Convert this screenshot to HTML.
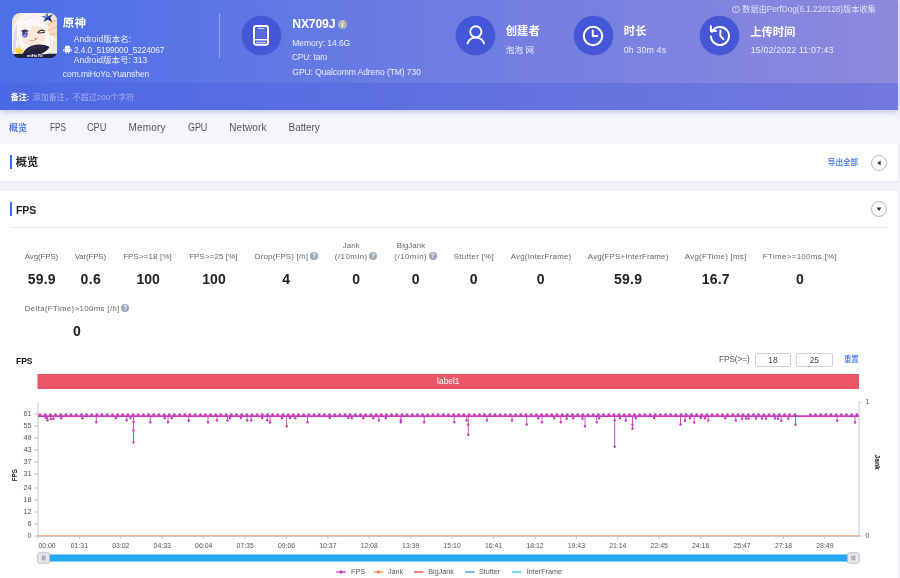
<!DOCTYPE html>
<html lang="zh-CN">
<head>
<meta charset="utf-8">
<title>PerfDog</title>
<style>
*{box-sizing:border-box;margin:0;padding:0}
html,body{width:900px;height:578px;overflow:hidden}
body{background:#f2f3f9;filter:blur(0.4px);font-family:"Liberation Sans","Noto Sans CJK SC",sans-serif;color:#333;position:relative}
.a{position:absolute;white-space:nowrap;line-height:1}
#hdr{position:absolute;left:0;top:0;width:898px;height:110.4px;background:linear-gradient(90deg,#4c6fe8 0%,#6b7ce2 45%,#8d89dd 100%);box-shadow:0 2px 6px rgba(105,110,215,.38)}
#note{position:absolute;left:0;top:82.9px;width:898px;height:27.5px;background:rgba(74,94,222,.40)}
.circ{position:absolute;width:39.6px;height:39.6px;border-radius:50%;background:#4557d6;box-shadow:0 0 0 .6px rgba(69,87,214,.5)}
#tabs{position:absolute;left:0;top:110px;width:898px;height:34px;background:#f5f6fb}
.card{position:absolute;left:0;width:898px;background:#fff}
.bar{position:absolute;left:9.5px;width:2.5px;height:14px;background:#3b6cf6}
.q{position:absolute;width:8px;height:8px;border-radius:50%;background:#9ea6ba;color:#fff;font-size:6.5px;line-height:8px;text-align:center;font-weight:bold}
.inp{position:absolute;height:14px;width:36.4px;border:1px solid #cdd1db;border-radius:1.5px;background:#fff}
svg text{font-family:"Liberation Sans","Noto Sans CJK SC",sans-serif}
</style>
</head>
<body>
<div id="tabs"></div><div id="hdr"></div><div id="note"></div>
<div class="card" style="top:143.5px;height:37px;box-shadow:0 1px 3px rgba(120,130,180,.12)"></div>
<div class="card" style="top:191px;height:400px"></div>
<svg class="a" style="left:11.7px;top:12.7px" width="45.4" height="45.4" viewBox="0 0 45.4 45.4">
<defs><clipPath id="ic"><rect x="0" y="0" width="45.4" height="45.4" rx="8.2"/></clipPath>
<filter id="ib" x="-5%" y="-5%" width="110%" height="110%"><feGaussianBlur stdDeviation="0.5"/></filter></defs>
<g clip-path="url(#ic)"><g filter="url(#ib)">
<rect x="-2" y="-2" width="50" height="50" fill="#f3e7d6"/>
<!-- back hair -->
<path d="M0.6 42C-1 26 0 9 10 2C20 -2.5 33 -1 38 6C43 13 43 25 40 33L33 41H5Z" fill="#f7f4f2"/>
<path d="M1.2 40C0.6 29 1.6 17 5 10.5C4.6 20 5.6 31 9.5 38.5Z" fill="#e0d9de"/>
<path d="M5.5 37C4.5 30 5 24 6.5 20" stroke="#fff" stroke-width="1.4" fill="none"/>
<!-- hand V sign -->
<path d="M34 11.5L44 4L46 5V24L37.5 22.5Z" fill="#f9dcc6"/>
<path d="M34.5 12.5L45.4 6.5M36 17.5L45.4 13.5M37.5 21.8L45.4 20.5" stroke="#e3a57a" stroke-width="0.8" stroke-opacity=".8" fill="none"/>
<!-- face -->
<path d="M8.5 17C10 11 20 8 28 11C33 13 35.5 19 34 24.5C32 30 25 33 19 32.5C12 32 7.5 25 8.5 17Z" fill="#fce9dc"/>
<path d="M10 27C14 31 22 32.5 28 30C24 33.5 14 33.5 10 27Z" fill="#f6d8c6"/>
<!-- bangs -->
<path d="M5 22C4 10 14 2 26 4C20 6 13 11 11 19C9.5 15 7 16 5 22Z" fill="#fcfaf9"/>
<path d="M14 12C18 6 28 4 35 10C37 13 37 17 35.5 20C33 14 27 11 20 13C19 16 17.5 18 16 19.5C16 16 15.5 14 14 12Z" fill="#fbf9f8"/>
<path d="M20 13C21 16 23 19 26 21M12 8C15 5 20 4 24 4.5" stroke="#e3dbe0" stroke-width="0.8" fill="none"/>
<!-- right lock -->
<path d="M33 19C39.5 22 42 30 38.5 37.5C35.5 40.5 30 40 28 38.5C33 35 35 28 33 19Z" fill="#fbf8f7"/>
<path d="M37 24C39.6 28.5 39 34 36.8 38.2" stroke="#ddd6de" stroke-width="0.8" fill="none"/>
<!-- left eye -->
<ellipse cx="12.9" cy="20.9" rx="2.7" ry="3.6" fill="#30357f"/>
<ellipse cx="12.9" cy="22.4" rx="2" ry="1.9" fill="#7f8eea"/>
<path d="M9.6 18.6C11 16.6 14.5 16.4 16.4 18.4" stroke="#241f3a" stroke-width="1.1" fill="none"/>
<circle cx="14" cy="19.6" r="0.7" fill="#fff"/>
<!-- wink -->
<path d="M25.8 19.4C27.8 17 30.6 16.8 32.4 18M26.6 20L32.4 19.5" stroke="#3a2c28" stroke-width="1.1" fill="none" stroke-linecap="round"/>
<!-- mouth -->
<path d="M17.3 26.9C19.5 28.3 21.8 28.1 23.6 26.5" stroke="#c48272" stroke-width="0.7" fill="none"/>
<ellipse cx="23.9" cy="25.7" rx="1.2" ry="1" fill="#e86f66"/>
<!-- 4-point star ornament -->
<path d="M35 -0.6L36.2 3.2L41 1.2L38.2 5L40.6 9.4L36 6.8L31.4 8.8L33.4 5L29 3.6L33.6 3.2Z" fill="#27418f"/>
<path d="M35 1L35.7 3.6L33.6 5.2L32 3.8Z" fill="#6d92dc"/>
<path d="M36 6L38 5L39.6 8.4Z" fill="#1b2a66"/>
<!-- dark scarf -->
<path d="M10.5 41.5C12.5 35 20 31.5 27 31.5C31.5 31.5 35.5 32.5 37.5 34C34.5 39.5 28 41.5 24 42.5Z" fill="#212039"/>
<path d="M14 38.5C18 35 25 33.3 32 34.2" stroke="#3d3e6a" stroke-width="0.8" fill="none"/>
<!-- yellow crown -->
<path d="M3.3 38.5L4.6 34.2L6.6 36.8L8 33.2L9.6 36.8L11.8 35L10.6 40.5H4.6Z" fill="#f5d33a"/>
<!-- bottom bar -->
<path d="M-1 41.3C8 40 18 41.3 23 41.5C30 41.7 38 40.2 46.4 41V46.4H-1Z" fill="#1f2040"/>
</g>
<text x="22.7" y="44.5" font-size="4.3" font-weight="bold" fill="#fff" text-anchor="middle">miHoYo</text>
</g>
</svg>

<div class="a" style="left:62.77px;top:16.62px;font-size:11.6px;color:#fff;letter-spacing:0.130px;font-weight:bold;">原神</div>
<div class="a" style="left:73.83px;top:35.04px;font-size:8.5px;color:#eceeff;letter-spacing:0.015px;">Android版本名:</div>
<svg class="a" style="left:62.5px;top:44.8px" width="9" height="9" viewBox="0 0 9 9"><path d="M1.6 3.4a2.9 2.9 0 0 1 5.8 0Z M1.6 3.8H7.4V7.1H6.3V8.6H5.3V7.1H3.7V8.6H2.7V7.1H1.6Z M0.3 3.9H1.1V6.4H0.3Z M7.9 3.9H8.7V6.4H7.9Z" fill="#fff"/></svg>
<div class="a" style="left:73.83px;top:45.54px;font-size:8.5px;color:#eceeff;letter-spacing:-0.120px;transform:scaleX(0.982);transform-origin:0 50%;">2.4.0_5199000_5224067</div>
<div class="a" style="left:73.83px;top:56.34px;font-size:8.5px;color:#eceeff;letter-spacing:-0.024px;">Android版本号: 313</div>
<div class="a" style="left:62.83px;top:70.03px;font-size:8.5px;color:#eceeff;letter-spacing:-0.090px;">com.miHoYo.Yuanshen</div>
<div class="a" style="left:218.8px;top:12.5px;width:1px;height:45px;background:rgba(255,255,255,.38)"></div>
<div class="circ" style="left:241.8px;top:15.499999999999996px"></div>
<svg class="a" style="left:252.3px;top:24.1px" width="18" height="23" viewBox="0 0 18 23" fill="none" stroke="#fff"><rect x="2" y="2" width="14" height="18.8" rx="2.2" stroke-width="1.9"/><rect x="3.6" y="6.2" width="10.8" height="7.8" fill="rgba(255,255,255,.13)" stroke="none"/><path d="M5.4 4.5H12.6" stroke-width="1.2" stroke-opacity=".8"/><path d="M2 15.7H16" stroke-width="1.5"/><path d="M4.2 18.3H13.8" stroke-width="1.1" stroke-opacity=".8"/></svg>
<div class="a" style="left:292.26px;top:18.32px;font-size:12.2px;color:#fff;letter-spacing:-0.176px;font-weight:bold;">NX709J</div>
<div class="a" style="left:338px;top:20px;width:9px;height:9px;border-radius:50%;background:#b4b4b0;color:#fff;font-size:7.6px;line-height:9px;text-align:center;font-style:italic;font-weight:bold;font-family:'Liberation Serif',serif">i</div>
<div class="a" style="left:292.33px;top:38.63px;font-size:8.5px;color:#eceeff;letter-spacing:-0.057px;">Memory: 14.6G</div>
<div class="a" style="left:292.33px;top:53.34px;font-size:8.5px;color:#eceeff;letter-spacing:-0.120px;transform:scaleX(0.975);transform-origin:0 50%;">CPU: taro</div>
<div class="a" style="left:292.33px;top:68.43px;font-size:8.5px;color:#eceeff;letter-spacing:-0.064px;">GPU: Qualcomm Adreno (TM) 730</div>
<div class="circ" style="left:455.7px;top:15.499999999999996px"></div>
<svg class="a" style="left:463.5px;top:23.3px" width="24" height="24" viewBox="0 0 24 24" fill="none" stroke="#fff" stroke-width="1.9" stroke-linecap="round"><circle cx="11.8" cy="8.8" r="5.6"/><path d="M3.5 20.3A8.9 8.9 0 0 1 20.1 20.3"/></svg>
<div class="a" style="left:505.77px;top:26.36px;font-size:11.3px;color:#fff;letter-spacing:0.015px;font-weight:bold;">创建者</div>
<div class="a" style="left:505.83px;top:45.94px;font-size:8.5px;color:#eceeff;letter-spacing:0.116px;">泡泡 网</div>
<div class="circ" style="left:573.6px;top:15.499999999999996px"></div>
<svg class="a" style="left:581.3px;top:23.5px" width="24" height="24" viewBox="0 0 24 24" fill="none" stroke="#fff" stroke-width="2" stroke-linecap="round" stroke-linejoin="round"><circle cx="12" cy="12" r="9.2"/><path d="M11.8 6.4V12H16.4"/></svg>
<div class="a" style="left:623.77px;top:26.36px;font-size:11.3px;color:#fff;letter-spacing:0.121px;font-weight:bold;">时长</div>
<div class="a" style="left:623.82px;top:45.79px;font-size:8.8px;color:#eceeff;letter-spacing:0.142px;">0h 30m 4s</div>
<div class="circ" style="left:699.8000000000001px;top:15.499999999999996px"></div>
<svg class="a" style="left:707.7px;top:23.7px" width="24" height="24" viewBox="0 0 24 24" fill="none" stroke="#fff" stroke-width="2" stroke-linecap="round" stroke-linejoin="round"><path d="M4 7.8A9 9 0 1 1 3 12.6"/><path d="M2.9 2.2V7.1H8"/><path d="M12.4 6.4V11.8L15.3 15.2"/></svg>
<div class="a" style="left:750.17px;top:26.56px;font-size:11.3px;color:#fff;letter-spacing:-0.038px;font-weight:bold;">上传时间</div>
<div class="a" style="left:750.82px;top:46.14px;font-size:8.9px;color:#eceeff;letter-spacing:0.109px;">15/02/2022 11:07:43</div>
<div class="a" style="left:732.2px;top:5.9px;width:7.4px;height:7.4px;border-radius:50%;border:0.8px solid rgba(255,255,255,.7);color:rgba(255,255,255,.7);font-size:5.5px;line-height:5.8px;text-align:center">i</div>
<div class="a" style="left:742.34px;top:5.88px;font-size:8.2px;color:rgba(255,255,255,.74);letter-spacing:-0.014px;">数据由PerfDog(6.1.220128)版本收集</div>
<div class="a" style="left:10.84px;top:93.78px;font-size:8px;color:#fff;letter-spacing:-0.117px;font-weight:bold;">备注:</div>
<div class="a" style="left:32.84px;top:93.78px;font-size:8px;color:#a6b1f1;letter-spacing:-0.003px;">添加备注，不超过200个字符</div>
<div class="a" style="left:9.32px;top:123.79px;font-size:9.2px;color:#2b66f0;letter-spacing:-0.120px;transform:scaleX(0.985);transform-origin:0 50%;font-weight:500;">概览</div>
<div class="a" style="left:49.80px;top:122.90px;font-size:10px;color:#555;letter-spacing:-0.120px;transform:scaleX(0.833);transform-origin:0 50%;">FPS</div>
<div class="a" style="left:87.30px;top:122.90px;font-size:10px;color:#555;letter-spacing:-0.120px;transform:scaleX(0.925);transform-origin:0 50%;">CPU</div>
<div class="a" style="left:128.60px;top:122.90px;font-size:10px;color:#555;letter-spacing:0.162px;">Memory</div>
<div class="a" style="left:187.80px;top:122.90px;font-size:10px;color:#555;letter-spacing:-0.120px;transform:scaleX(0.901);transform-origin:0 50%;">GPU</div>
<div class="a" style="left:229.30px;top:122.90px;font-size:10px;color:#555;letter-spacing:0.073px;">Network</div>
<div class="a" style="left:288.60px;top:122.90px;font-size:10px;color:#555;letter-spacing:-0.084px;">Battery</div>
<div class="bar" style="top:155.3px"></div>
<div class="a" style="left:15.77px;top:157.46px;font-size:11.3px;color:#222;letter-spacing:-0.079px;font-weight:bold;">概览</div>
<div class="a" style="left:827.85px;top:159.28px;font-size:7.6px;color:#3a72f2;letter-spacing:-0.018px;font-weight:500;">导出全部</div>
<div class="a" style="left:870.8px;top:154.6px;width:16.5px;height:16.5px;border-radius:50%;border:1px solid #b4b7c2"></div>
<svg class="a" style="left:871px;top:154.9px" width="16" height="16"><path d="M9.7 5.6V10.4L6.2 8Z" fill="#333"/></svg>
<div class="bar" style="top:202.4px"></div>
<div class="a" style="left:16.07px;top:203.92px;font-size:11.6px;color:#222;letter-spacing:-0.120px;transform:scaleX(0.908);transform-origin:0 50%;font-weight:bold;">FPS</div>
<div class="a" style="left:870.8px;top:200.9px;width:16.5px;height:16.5px;border-radius:50%;border:1px solid #b4b7c2"></div>
<svg class="a" style="left:871px;top:201.2px" width="16" height="16"><path d="M5.6 6.6H10.4L8 10Z" fill="#333"/></svg>
<div class="a" style="left:10px;top:227px;width:877px;height:1px;background:#e9e9ef"></div>
<div class="a" style="left:24.84px;top:252.83px;font-size:7.9px;color:#666;letter-spacing:-0.093px;">Avg(FPS)</div>
<div class="a" style="left:27.72px;top:271.74px;font-size:14px;color:#222;letter-spacing:0.202px;font-weight:bold;">59.9</div>
<div class="a" style="left:74.84px;top:252.83px;font-size:7.9px;color:#666;letter-spacing:-0.148px;">Var(FPS)</div>
<div class="a" style="left:80.52px;top:271.74px;font-size:14px;color:#222;letter-spacing:0.364px;font-weight:bold;">0.6</div>
<div class="a" style="left:123.14px;top:252.83px;font-size:7.9px;color:#666;letter-spacing:0.171px;">FPS&gt;=18 [%]</div>
<div class="a" style="left:136.52px;top:271.74px;font-size:14px;color:#222;letter-spacing:-0.033px;font-weight:bold;">100</div>
<div class="a" style="left:189.14px;top:252.83px;font-size:7.9px;color:#666;letter-spacing:0.143px;">FPS&gt;=25 [%]</div>
<div class="a" style="left:202.22px;top:271.74px;font-size:14px;color:#222;letter-spacing:0.067px;font-weight:bold;">100</div>
<div class="a" style="left:254.84px;top:252.83px;font-size:7.9px;color:#666;letter-spacing:0.174px;">Drop(FPS) [/h]</div>
<div class="q" style="left:310px;top:252.2px">?</div>
<div class="a" style="left:282.22px;top:271.74px;font-size:14px;color:#222;letter-spacing:1.563px;font-weight:bold;">4</div>
<div class="a" style="left:342.84px;top:242.13px;font-size:7.9px;color:#666;letter-spacing:0.036px;">Jank</div>
<div class="a" style="left:334.84px;top:252.83px;font-size:7.9px;color:#666;letter-spacing:0.483px;">(/10min)</div>
<div class="q" style="left:369.2px;top:252.2px">?</div>
<div class="a" style="left:352.22px;top:271.74px;font-size:14px;color:#222;letter-spacing:1.063px;font-weight:bold;">0</div>
<div class="a" style="left:396.84px;top:242.13px;font-size:7.9px;color:#666;letter-spacing:0.034px;">BigJank</div>
<div class="a" style="left:394.34px;top:252.83px;font-size:7.9px;color:#666;letter-spacing:0.483px;">(/10min)</div>
<div class="q" style="left:428.8px;top:252.2px">?</div>
<div class="a" style="left:411.72px;top:271.74px;font-size:14px;color:#222;letter-spacing:0.763px;font-weight:bold;">0</div>
<div class="a" style="left:453.64px;top:252.83px;font-size:7.9px;color:#666;letter-spacing:0.316px;">Stutter [%]</div>
<div class="a" style="left:469.72px;top:271.74px;font-size:14px;color:#222;letter-spacing:0.763px;font-weight:bold;">0</div>
<div class="a" style="left:510.64px;top:252.83px;font-size:7.9px;color:#666;letter-spacing:0.235px;">Avg(InterFrame)</div>
<div class="a" style="left:536.72px;top:271.74px;font-size:14px;color:#222;letter-spacing:0.763px;font-weight:bold;">0</div>
<div class="a" style="left:587.84px;top:252.83px;font-size:7.9px;color:#666;letter-spacing:0.177px;">Avg(FPS+InterFrame)</div>
<div class="a" style="left:614.02px;top:271.74px;font-size:14px;color:#222;letter-spacing:0.253px;font-weight:bold;">59.9</div>
<div class="a" style="left:684.84px;top:252.83px;font-size:7.9px;color:#666;letter-spacing:0.249px;">Avg(FTime) [ms]</div>
<div class="a" style="left:701.72px;top:271.74px;font-size:14px;color:#222;letter-spacing:0.202px;font-weight:bold;">16.7</div>
<div class="a" style="left:762.84px;top:252.83px;font-size:7.9px;color:#666;letter-spacing:0.360px;">FTime&gt;=100ms [%]</div>
<div class="a" style="left:796.02px;top:271.74px;font-size:14px;color:#222;letter-spacing:0.763px;font-weight:bold;">0</div>
<div class="a" style="left:24.84px;top:304.63px;font-size:7.9px;color:#666;letter-spacing:0.332px;">Delta(FTime)&gt;100ms [/h]</div>
<div class="q" style="left:121.3px;top:304.2px">?</div>
<div class="a" style="left:73.02px;top:323.74px;font-size:14px;color:#222;letter-spacing:0.763px;font-weight:bold;">0</div>
<div class="a" style="left:15.62px;top:356.79px;font-size:8.8px;color:#111;letter-spacing:-0.120px;transform:scaleX(0.976);transform-origin:0 50%;font-weight:bold;">FPS</div>
<div class="a" style="left:718.83px;top:355.39px;font-size:8.6px;color:#555;letter-spacing:-0.120px;transform:scaleX(0.968);transform-origin:0 50%;">FPS(&gt;=)</div>
<div class="inp" style="left:754.8px;top:352.5px"></div>
<div class="inp" style="left:796.3px;top:352.5px"></div>
<div class="a" style="left:768.33px;top:355.58px;font-size:8.4px;color:#444;letter-spacing:0.004px;">18</div>
<div class="a" style="left:809.63px;top:355.58px;font-size:8.4px;color:#444;letter-spacing:0.004px;">25</div>
<div class="a" style="left:843.85px;top:355.98px;font-size:7.6px;color:#3a72f2;letter-spacing:-0.120px;transform:scaleX(0.984);transform-origin:0 50%;font-weight:500;">重置</div>
<svg class="a" style="left:0;top:340px" width="900" height="238" viewBox="0 340 900 238">
<rect x="37.5" y="374" width="821.5" height="15" fill="#eb5566"/>
<text x="448.3" y="384.1" font-size="8.4" fill="#fff" text-anchor="middle">label1</text>
<path d="M38.0 402V536.4M859.0 402V536.4M37.5 536.4H859.5" stroke="#c3c8d6" stroke-width="1" fill="none"/>
<path d="M34.5 536.0H38.0" stroke="#a9b0c2" stroke-width="1"/>
<text x="31.5" y="538.2" font-size="7.2" fill="#555" text-anchor="end">0</text>
<path d="M34.5 524.0H38.0" stroke="#a9b0c2" stroke-width="1"/>
<text x="31.5" y="526.2" font-size="7.2" fill="#555" text-anchor="end">6</text>
<path d="M34.5 512.0H38.0" stroke="#a9b0c2" stroke-width="1"/>
<text x="31.5" y="514.2" font-size="7.2" fill="#555" text-anchor="end">12</text>
<path d="M34.5 500.0H38.0" stroke="#a9b0c2" stroke-width="1"/>
<text x="31.5" y="502.2" font-size="7.2" fill="#555" text-anchor="end">18</text>
<path d="M34.5 488.0H38.0" stroke="#a9b0c2" stroke-width="1"/>
<text x="31.5" y="490.2" font-size="7.2" fill="#555" text-anchor="end">24</text>
<path d="M34.5 474.0H38.0" stroke="#a9b0c2" stroke-width="1"/>
<text x="31.5" y="476.2" font-size="7.2" fill="#555" text-anchor="end">31</text>
<path d="M34.5 462.0H38.0" stroke="#a9b0c2" stroke-width="1"/>
<text x="31.5" y="464.2" font-size="7.2" fill="#555" text-anchor="end">37</text>
<path d="M34.5 450.0H38.0" stroke="#a9b0c2" stroke-width="1"/>
<text x="31.5" y="452.2" font-size="7.2" fill="#555" text-anchor="end">43</text>
<path d="M34.5 438.0H38.0" stroke="#a9b0c2" stroke-width="1"/>
<text x="31.5" y="440.2" font-size="7.2" fill="#555" text-anchor="end">49</text>
<path d="M34.5 426.0H38.0" stroke="#a9b0c2" stroke-width="1"/>
<text x="31.5" y="428.2" font-size="7.2" fill="#555" text-anchor="end">55</text>
<path d="M34.5 414.0H38.0" stroke="#a9b0c2" stroke-width="1"/>
<text x="31.5" y="416.2" font-size="7.2" fill="#555" text-anchor="end">61</text>
<text x="17.2" y="475.2" font-size="6.3" font-weight="bold" fill="#222" text-anchor="middle" transform="rotate(-90 17.2 475.2)">FPS</text>
<path d="M859.0 402H862.5" stroke="#c3c8d6" stroke-width="1"/>
<text x="865.5" y="403.8" font-size="7.2" fill="#555">1</text>
<path d="M859.0 536.0H862.5" stroke="#c3c8d6" stroke-width="1"/>
<text x="865.5" y="537.8" font-size="7.2" fill="#555">0</text>
<text x="875" y="462.2" font-size="6.7" font-weight="bold" fill="#222" text-anchor="middle" transform="rotate(90 875 462.2)">Jank</text>
<path d="M38.0 536.0V539.0" stroke="#c3c8d6" stroke-width="1"/>
<text x="47.0" y="548.2" font-size="6.9" fill="#555" text-anchor="middle">00:00</text>
<path d="M79.4 536.0V539.0" stroke="#c3c8d6" stroke-width="1"/>
<text x="79.4" y="548.2" font-size="6.9" fill="#555" text-anchor="middle">01:31</text>
<path d="M120.8 536.0V539.0" stroke="#c3c8d6" stroke-width="1"/>
<text x="120.8" y="548.2" font-size="6.9" fill="#555" text-anchor="middle">03:02</text>
<path d="M162.2 536.0V539.0" stroke="#c3c8d6" stroke-width="1"/>
<text x="162.2" y="548.2" font-size="6.9" fill="#555" text-anchor="middle">04:33</text>
<path d="M203.7 536.0V539.0" stroke="#c3c8d6" stroke-width="1"/>
<text x="203.7" y="548.2" font-size="6.9" fill="#555" text-anchor="middle">06:04</text>
<path d="M245.1 536.0V539.0" stroke="#c3c8d6" stroke-width="1"/>
<text x="245.1" y="548.2" font-size="6.9" fill="#555" text-anchor="middle">07:35</text>
<path d="M286.5 536.0V539.0" stroke="#c3c8d6" stroke-width="1"/>
<text x="286.5" y="548.2" font-size="6.9" fill="#555" text-anchor="middle">09:06</text>
<path d="M327.9 536.0V539.0" stroke="#c3c8d6" stroke-width="1"/>
<text x="327.9" y="548.2" font-size="6.9" fill="#555" text-anchor="middle">10:37</text>
<path d="M369.3 536.0V539.0" stroke="#c3c8d6" stroke-width="1"/>
<text x="369.3" y="548.2" font-size="6.9" fill="#555" text-anchor="middle">12:08</text>
<path d="M410.7 536.0V539.0" stroke="#c3c8d6" stroke-width="1"/>
<text x="410.7" y="548.2" font-size="6.9" fill="#555" text-anchor="middle">13:39</text>
<path d="M452.1 536.0V539.0" stroke="#c3c8d6" stroke-width="1"/>
<text x="452.1" y="548.2" font-size="6.9" fill="#555" text-anchor="middle">15:10</text>
<path d="M493.6 536.0V539.0" stroke="#c3c8d6" stroke-width="1"/>
<text x="493.6" y="548.2" font-size="6.9" fill="#555" text-anchor="middle">16:41</text>
<path d="M535.0 536.0V539.0" stroke="#c3c8d6" stroke-width="1"/>
<text x="535.0" y="548.2" font-size="6.9" fill="#555" text-anchor="middle">18:12</text>
<path d="M576.4 536.0V539.0" stroke="#c3c8d6" stroke-width="1"/>
<text x="576.4" y="548.2" font-size="6.9" fill="#555" text-anchor="middle">19:43</text>
<path d="M617.8 536.0V539.0" stroke="#c3c8d6" stroke-width="1"/>
<text x="617.8" y="548.2" font-size="6.9" fill="#555" text-anchor="middle">21:14</text>
<path d="M659.2 536.0V539.0" stroke="#c3c8d6" stroke-width="1"/>
<text x="659.2" y="548.2" font-size="6.9" fill="#555" text-anchor="middle">22:45</text>
<path d="M700.6 536.0V539.0" stroke="#c3c8d6" stroke-width="1"/>
<text x="700.6" y="548.2" font-size="6.9" fill="#555" text-anchor="middle">24:16</text>
<path d="M742.0 536.0V539.0" stroke="#c3c8d6" stroke-width="1"/>
<text x="742.0" y="548.2" font-size="6.9" fill="#555" text-anchor="middle">25:47</text>
<path d="M783.5 536.0V539.0" stroke="#c3c8d6" stroke-width="1"/>
<text x="783.5" y="548.2" font-size="6.9" fill="#555" text-anchor="middle">27:18</text>
<path d="M824.9 536.0V539.0" stroke="#c3c8d6" stroke-width="1"/>
<text x="824.9" y="548.2" font-size="6.9" fill="#555" text-anchor="middle">28:49</text>
<path d="M38.0 535.7H859.0" stroke="#f3a073" stroke-width="0.9"/>
<path d="M38.0 416.2H859.0" stroke="#c53cbf" stroke-width="1.75" fill="none"/>
<path d="M45.8 416.2V418.0M47.5 416.2V420.3M50.8 416.2V419.0M53.3 416.2V418.7M61.2 416.2V418.3M82.5 416.2V418.3M96.3 416.2V422.2M115.8 416.2V418.3M126.7 416.2V420.3M130.5 416.2V418.0M133.5 416.2V442.5M150.3 416.2V422.2M164.7 416.2V418.3M168.0 416.2V422.2M171.7 416.2V418.3M188.7 416.2V420.8M208.0 416.2V422.2M217.0 416.2V420.5M227.5 416.2V420.5M230.0 416.2V418.3M240.8 416.2V418.0M247.2 416.2V420.5M251.2 416.2V420.5M262.2 416.2V418.3M267.2 416.2V420.3M270.0 416.2V422.5M282.0 416.2V418.3M286.7 416.2V426.3M290.0 416.2V418.0M295.3 416.2V418.3M307.5 416.2V422.2M329.7 416.2V418.0M348.3 416.2V418.0M351.7 416.2V418.3M363.3 416.2V418.3M373.3 416.2V418.3M378.8 416.2V420.5M385.8 416.2V418.3M400.8 416.2V422.2M424.2 416.2V422.2M454.2 416.2V422.2M466.7 416.2V420.5M468.3 416.2V434.7M487.0 416.2V420.5M512.0 416.2V420.5M526.7 416.2V424.5M538.3 416.2V418.3M542.0 416.2V422.2M554.2 416.2V418.3M560.8 416.2V422.2M566.7 416.2V418.7M573.3 416.2V418.3M582.5 416.2V418.7M585.0 416.2V426.3M596.7 416.2V422.2M599.2 416.2V418.3M614.7 416.2V446.7M620.0 416.2V418.3M625.8 416.2V420.5M632.5 416.2V428.7M635.8 416.2V418.3M654.2 416.2V418.3M680.5 416.2V424.5M685.0 416.2V420.8M690.0 416.2V418.3M694.2 416.2V422.5M700.8 416.2V418.0M705.0 416.2V418.3M708.3 416.2V420.5M725.3 416.2V418.3M735.8 416.2V420.4M742.0 416.2V418.7M746.0 416.2V418.5M748.5 416.2V418.7M756.0 416.2V418.5M762.0 416.2V418.5M766.0 416.2V418.7M775.0 416.2V418.5M778.0 416.2V418.7M781.3 416.2V420.8M788.3 416.2V418.8M795.5 416.2V424.7M837.2 416.2V420.8M855.0 416.2V422.5" stroke="#c53cbf" stroke-width="0.9" fill="none"/>
<g fill="#c53cbf">
<circle cx="45.8" cy="418.0" r="1.2"/>
<circle cx="47.5" cy="420.3" r="1.2"/>
<circle cx="50.8" cy="419.0" r="1.2"/>
<circle cx="53.3" cy="418.7" r="1.2"/>
<circle cx="61.2" cy="418.3" r="1.2"/>
<circle cx="82.5" cy="418.3" r="1.2"/>
<circle cx="96.3" cy="422.2" r="1.2"/>
<circle cx="115.8" cy="418.3" r="1.2"/>
<circle cx="126.7" cy="420.3" r="1.2"/>
<circle cx="130.5" cy="418.0" r="1.2"/>
<circle cx="133.5" cy="422.0" r="1.2"/>
<circle cx="133.5" cy="430.5" r="1.2"/>
<circle cx="133.5" cy="442.5" r="1.2"/>
<circle cx="150.3" cy="422.2" r="1.2"/>
<circle cx="164.7" cy="418.3" r="1.2"/>
<circle cx="168.0" cy="422.2" r="1.2"/>
<circle cx="171.7" cy="418.3" r="1.2"/>
<circle cx="188.7" cy="420.8" r="1.2"/>
<circle cx="208.0" cy="422.2" r="1.2"/>
<circle cx="217.0" cy="420.5" r="1.2"/>
<circle cx="227.5" cy="420.5" r="1.2"/>
<circle cx="230.0" cy="418.3" r="1.2"/>
<circle cx="240.8" cy="418.0" r="1.2"/>
<circle cx="247.2" cy="420.5" r="1.2"/>
<circle cx="251.2" cy="420.5" r="1.2"/>
<circle cx="262.2" cy="418.3" r="1.2"/>
<circle cx="267.2" cy="420.3" r="1.2"/>
<circle cx="270.0" cy="422.5" r="1.2"/>
<circle cx="282.0" cy="418.3" r="1.2"/>
<circle cx="286.7" cy="426.3" r="1.2"/>
<circle cx="290.0" cy="418.0" r="1.2"/>
<circle cx="295.3" cy="418.3" r="1.2"/>
<circle cx="307.5" cy="422.2" r="1.2"/>
<circle cx="329.7" cy="418.0" r="1.2"/>
<circle cx="348.3" cy="418.0" r="1.2"/>
<circle cx="351.7" cy="418.3" r="1.2"/>
<circle cx="363.3" cy="418.3" r="1.2"/>
<circle cx="373.3" cy="418.3" r="1.2"/>
<circle cx="378.8" cy="420.5" r="1.2"/>
<circle cx="385.8" cy="418.3" r="1.2"/>
<circle cx="400.8" cy="420.3" r="1.2"/>
<circle cx="400.8" cy="422.2" r="1.2"/>
<circle cx="424.2" cy="422.2" r="1.2"/>
<circle cx="454.2" cy="422.2" r="1.2"/>
<circle cx="466.7" cy="420.5" r="1.2"/>
<circle cx="468.3" cy="424.7" r="1.2"/>
<circle cx="468.3" cy="434.7" r="1.2"/>
<circle cx="487.0" cy="420.5" r="1.2"/>
<circle cx="512.0" cy="420.5" r="1.2"/>
<circle cx="526.7" cy="424.5" r="1.2"/>
<circle cx="538.3" cy="418.3" r="1.2"/>
<circle cx="542.0" cy="422.2" r="1.2"/>
<circle cx="554.2" cy="418.3" r="1.2"/>
<circle cx="560.8" cy="422.2" r="1.2"/>
<circle cx="566.7" cy="418.7" r="1.2"/>
<circle cx="573.3" cy="418.3" r="1.2"/>
<circle cx="582.5" cy="418.7" r="1.2"/>
<circle cx="585.0" cy="426.3" r="1.2"/>
<circle cx="596.7" cy="422.2" r="1.2"/>
<circle cx="599.2" cy="418.3" r="1.2"/>
<circle cx="614.7" cy="420.3" r="1.2"/>
<circle cx="614.7" cy="446.7" r="1.2"/>
<circle cx="620.0" cy="418.3" r="1.2"/>
<circle cx="625.8" cy="420.5" r="1.2"/>
<circle cx="632.5" cy="424.5" r="1.2"/>
<circle cx="632.5" cy="428.7" r="1.2"/>
<circle cx="635.8" cy="418.3" r="1.2"/>
<circle cx="654.2" cy="418.3" r="1.2"/>
<circle cx="680.5" cy="424.5" r="1.2"/>
<circle cx="685.0" cy="420.8" r="1.2"/>
<circle cx="690.0" cy="418.3" r="1.2"/>
<circle cx="694.2" cy="422.5" r="1.2"/>
<circle cx="700.8" cy="418.0" r="1.2"/>
<circle cx="705.0" cy="418.3" r="1.2"/>
<circle cx="708.3" cy="420.5" r="1.2"/>
<circle cx="725.3" cy="418.3" r="1.2"/>
<circle cx="735.8" cy="420.4" r="1.2"/>
<circle cx="742.0" cy="418.7" r="1.2"/>
<circle cx="746.0" cy="418.5" r="1.2"/>
<circle cx="748.5" cy="418.7" r="1.2"/>
<circle cx="756.0" cy="418.5" r="1.2"/>
<circle cx="762.0" cy="418.5" r="1.2"/>
<circle cx="766.0" cy="418.7" r="1.2"/>
<circle cx="775.0" cy="418.5" r="1.2"/>
<circle cx="778.0" cy="418.7" r="1.2"/>
<circle cx="781.3" cy="420.8" r="1.2"/>
<circle cx="788.3" cy="418.8" r="1.2"/>
<circle cx="795.5" cy="424.7" r="1.2"/>
<circle cx="837.2" cy="420.8" r="1.2"/>
<circle cx="855.0" cy="422.5" r="1.2"/>
<circle cx="40.0" cy="414.75" r="1.4"/>
<circle cx="45.2" cy="414.75" r="1.4"/>
<circle cx="50.3" cy="414.75" r="1.4"/>
<circle cx="55.5" cy="414.75" r="1.4"/>
<circle cx="60.7" cy="414.75" r="1.4"/>
<circle cx="65.9" cy="414.75" r="1.4"/>
<circle cx="71.0" cy="414.75" r="1.4"/>
<circle cx="76.2" cy="414.75" r="1.4"/>
<circle cx="81.4" cy="414.75" r="1.4"/>
<circle cx="86.5" cy="414.75" r="1.4"/>
<circle cx="91.7" cy="414.75" r="1.4"/>
<circle cx="96.9" cy="414.75" r="1.4"/>
<circle cx="102.0" cy="414.75" r="1.4"/>
<circle cx="107.2" cy="414.75" r="1.4"/>
<circle cx="112.4" cy="414.75" r="1.4"/>
<circle cx="117.6" cy="414.75" r="1.4"/>
<circle cx="122.7" cy="414.75" r="1.4"/>
<circle cx="127.9" cy="414.75" r="1.4"/>
<circle cx="133.1" cy="414.75" r="1.4"/>
<circle cx="138.2" cy="414.75" r="1.4"/>
<circle cx="143.4" cy="414.75" r="1.4"/>
<circle cx="148.6" cy="414.75" r="1.4"/>
<circle cx="153.7" cy="414.75" r="1.4"/>
<circle cx="158.9" cy="414.75" r="1.4"/>
<circle cx="164.1" cy="414.75" r="1.4"/>
<circle cx="169.2" cy="414.75" r="1.4"/>
<circle cx="174.4" cy="414.75" r="1.4"/>
<circle cx="179.6" cy="414.75" r="1.4"/>
<circle cx="184.8" cy="414.75" r="1.4"/>
<circle cx="189.9" cy="414.75" r="1.4"/>
<circle cx="195.1" cy="414.75" r="1.4"/>
<circle cx="200.3" cy="414.75" r="1.4"/>
<circle cx="205.4" cy="414.75" r="1.4"/>
<circle cx="210.6" cy="414.75" r="1.4"/>
<circle cx="215.8" cy="414.75" r="1.4"/>
<circle cx="220.9" cy="414.75" r="1.4"/>
<circle cx="226.1" cy="414.75" r="1.4"/>
<circle cx="231.3" cy="414.75" r="1.4"/>
<circle cx="236.5" cy="414.75" r="1.4"/>
<circle cx="241.6" cy="414.75" r="1.4"/>
<circle cx="246.8" cy="414.75" r="1.4"/>
<circle cx="252.0" cy="414.75" r="1.4"/>
<circle cx="257.1" cy="414.75" r="1.4"/>
<circle cx="262.3" cy="414.75" r="1.4"/>
<circle cx="267.5" cy="414.75" r="1.4"/>
<circle cx="272.6" cy="414.75" r="1.4"/>
<circle cx="277.8" cy="414.75" r="1.4"/>
<circle cx="283.0" cy="414.75" r="1.4"/>
<circle cx="288.2" cy="414.75" r="1.4"/>
<circle cx="293.3" cy="414.75" r="1.4"/>
<circle cx="298.5" cy="414.75" r="1.4"/>
<circle cx="303.7" cy="414.75" r="1.4"/>
<circle cx="308.8" cy="414.75" r="1.4"/>
<circle cx="314.0" cy="414.75" r="1.4"/>
<circle cx="319.2" cy="414.75" r="1.4"/>
<circle cx="324.3" cy="414.75" r="1.4"/>
<circle cx="329.5" cy="414.75" r="1.4"/>
<circle cx="334.7" cy="414.75" r="1.4"/>
<circle cx="339.9" cy="414.75" r="1.4"/>
<circle cx="345.0" cy="414.75" r="1.4"/>
<circle cx="350.2" cy="414.75" r="1.4"/>
<circle cx="355.4" cy="414.75" r="1.4"/>
<circle cx="360.5" cy="414.75" r="1.4"/>
<circle cx="365.7" cy="414.75" r="1.4"/>
<circle cx="370.9" cy="414.75" r="1.4"/>
<circle cx="376.1" cy="414.75" r="1.4"/>
<circle cx="381.2" cy="414.75" r="1.4"/>
<circle cx="386.4" cy="414.75" r="1.4"/>
<circle cx="391.6" cy="414.75" r="1.4"/>
<circle cx="396.7" cy="414.75" r="1.4"/>
<circle cx="401.9" cy="414.75" r="1.4"/>
<circle cx="407.1" cy="414.75" r="1.4"/>
<circle cx="412.2" cy="414.75" r="1.4"/>
<circle cx="417.4" cy="414.75" r="1.4"/>
<circle cx="422.6" cy="414.75" r="1.4"/>
<circle cx="427.8" cy="414.75" r="1.4"/>
<circle cx="432.9" cy="414.75" r="1.4"/>
<circle cx="438.1" cy="414.75" r="1.4"/>
<circle cx="443.3" cy="414.75" r="1.4"/>
<circle cx="448.4" cy="414.75" r="1.4"/>
<circle cx="453.6" cy="414.75" r="1.4"/>
<circle cx="458.8" cy="414.75" r="1.4"/>
<circle cx="463.9" cy="414.75" r="1.4"/>
<circle cx="469.1" cy="414.75" r="1.4"/>
<circle cx="474.3" cy="414.75" r="1.4"/>
<circle cx="479.5" cy="414.75" r="1.4"/>
<circle cx="484.6" cy="414.75" r="1.4"/>
<circle cx="489.8" cy="414.75" r="1.4"/>
<circle cx="495.0" cy="414.75" r="1.4"/>
<circle cx="500.1" cy="414.75" r="1.4"/>
<circle cx="505.3" cy="414.75" r="1.4"/>
<circle cx="510.5" cy="414.75" r="1.4"/>
<circle cx="515.6" cy="414.75" r="1.4"/>
<circle cx="520.8" cy="414.75" r="1.4"/>
<circle cx="526.0" cy="414.75" r="1.4"/>
<circle cx="531.2" cy="414.75" r="1.4"/>
<circle cx="536.3" cy="414.75" r="1.4"/>
<circle cx="541.5" cy="414.75" r="1.4"/>
<circle cx="546.7" cy="414.75" r="1.4"/>
<circle cx="551.8" cy="414.75" r="1.4"/>
<circle cx="557.0" cy="414.75" r="1.4"/>
<circle cx="562.2" cy="414.75" r="1.4"/>
<circle cx="567.3" cy="414.75" r="1.4"/>
<circle cx="572.5" cy="414.75" r="1.4"/>
<circle cx="577.7" cy="414.75" r="1.4"/>
<circle cx="582.9" cy="414.75" r="1.4"/>
<circle cx="588.0" cy="414.75" r="1.4"/>
<circle cx="593.2" cy="414.75" r="1.4"/>
<circle cx="598.4" cy="414.75" r="1.4"/>
<circle cx="603.5" cy="414.75" r="1.4"/>
<circle cx="608.7" cy="414.75" r="1.4"/>
<circle cx="613.9" cy="414.75" r="1.4"/>
<circle cx="619.0" cy="414.75" r="1.4"/>
<circle cx="624.2" cy="414.75" r="1.4"/>
<circle cx="629.4" cy="414.75" r="1.4"/>
<circle cx="634.5" cy="414.75" r="1.4"/>
<circle cx="639.7" cy="414.75" r="1.4"/>
<circle cx="644.9" cy="414.75" r="1.4"/>
<circle cx="650.1" cy="414.75" r="1.4"/>
<circle cx="655.2" cy="414.75" r="1.4"/>
<circle cx="660.4" cy="414.75" r="1.4"/>
<circle cx="665.6" cy="414.75" r="1.4"/>
<circle cx="670.7" cy="414.75" r="1.4"/>
<circle cx="675.9" cy="414.75" r="1.4"/>
<circle cx="681.1" cy="414.75" r="1.4"/>
<circle cx="686.2" cy="414.75" r="1.4"/>
<circle cx="691.4" cy="414.75" r="1.4"/>
<circle cx="696.6" cy="414.75" r="1.4"/>
<circle cx="701.8" cy="414.75" r="1.4"/>
<circle cx="706.9" cy="414.75" r="1.4"/>
<circle cx="712.1" cy="414.75" r="1.4"/>
<circle cx="717.3" cy="414.75" r="1.4"/>
<circle cx="722.4" cy="414.75" r="1.4"/>
<circle cx="727.6" cy="414.75" r="1.4"/>
<circle cx="732.8" cy="414.75" r="1.4"/>
<circle cx="737.9" cy="414.75" r="1.4"/>
<circle cx="743.1" cy="414.75" r="1.4"/>
<circle cx="748.3" cy="414.75" r="1.4"/>
<circle cx="753.5" cy="414.75" r="1.4"/>
<circle cx="758.6" cy="414.75" r="1.4"/>
<circle cx="763.8" cy="414.75" r="1.4"/>
<circle cx="769.0" cy="414.75" r="1.4"/>
<circle cx="774.1" cy="414.75" r="1.4"/>
<circle cx="779.3" cy="414.75" r="1.4"/>
<circle cx="784.5" cy="414.75" r="1.4"/>
<circle cx="789.6" cy="414.75" r="1.4"/>
<circle cx="794.8" cy="414.75" r="1.4"/>
<circle cx="810.3" cy="414.75" r="1.4"/>
<circle cx="815.5" cy="414.75" r="1.4"/>
<circle cx="820.7" cy="414.75" r="1.4"/>
<circle cx="825.8" cy="414.75" r="1.4"/>
<circle cx="831.0" cy="414.75" r="1.4"/>
<circle cx="836.2" cy="414.75" r="1.4"/>
<circle cx="841.3" cy="414.75" r="1.4"/>
<circle cx="846.5" cy="414.75" r="1.4"/>
<circle cx="851.7" cy="414.75" r="1.4"/>
<circle cx="856.9" cy="414.75" r="1.4"/>
</g>
<rect x="40.0" y="554.5" width="817.0" height="7" fill="#23a7f2"/>
<rect x="37.7" y="552.8" width="12" height="10.4" rx="2" fill="#e6e8ec" stroke="#aeb2bb" stroke-width="0.8"/>
<path d="M42.300000000000004 555.6V560.4M43.7 555.6V560.4M45.1 555.6V560.4" stroke="#777c88" stroke-width="0.7"/>
<rect x="847.3" y="552.8" width="12" height="10.4" rx="2" fill="#e6e8ec" stroke="#aeb2bb" stroke-width="0.8"/>
<path d="M851.9 555.6V560.4M853.3 555.6V560.4M854.6999999999999 555.6V560.4" stroke="#777c88" stroke-width="0.7"/>
<path d="M336.3 572H345.8" stroke="#c53cbf" stroke-width="1.3"/>
<circle cx="341.1" cy="572" r="1.7" fill="#c53cbf"/>
<text x="351" y="574.3" font-size="7.2" fill="#555">FPS</text>
<path d="M373.8 572H383.3" stroke="#f58a3c" stroke-width="1.3"/>
<circle cx="378.6" cy="572" r="1.7" fill="#f58a3c"/>
<text x="388" y="574.3" font-size="7.2" fill="#555">Jank</text>
<path d="M414 572H423.5" stroke="#ea3b46" stroke-width="1.3"/>
<text x="428.3" y="574.3" font-size="7.2" fill="#555">BigJank</text>
<path d="M465 572H474.5" stroke="#3b8cf0" stroke-width="1.3"/>
<text x="479" y="574.3" font-size="7.2" fill="#555">Stutter</text>
<path d="M512 572H521.5" stroke="#2fc7e6" stroke-width="1.3"/>
<text x="526.8" y="574.3" font-size="7.2" fill="#555">InterFrame</text>
</svg>
</body>
</html>
